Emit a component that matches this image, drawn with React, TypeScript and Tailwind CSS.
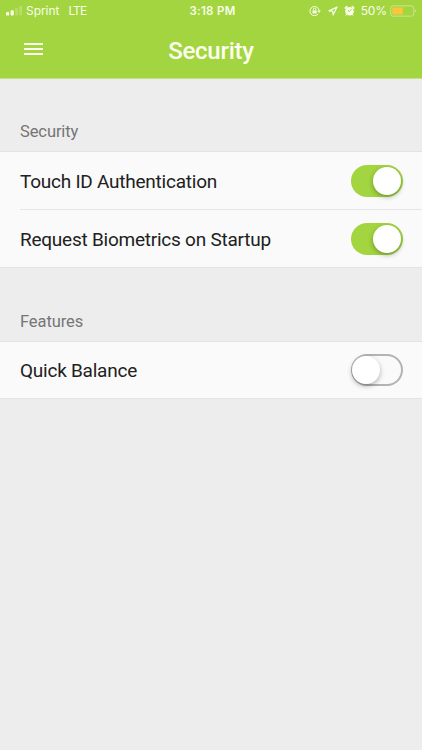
function StatusBar() {
  return (
    <div className="grid h-[22px] grid-cols-[1fr_auto_1fr] items-center pl-[6px] pr-[5px] font-['Inter',sans-serif] text-[12px] leading-[22px] text-[#f9fdea]">
      <div className="flex items-center">
        <svg width="16" height="10" viewBox="0 0 16 10" fill="currentColor">
          <rect x="0" y="6" width="3.2" height="3.5" rx=".9" />
          <rect x="4.6" y="4.2" width="3.2" height="5.3" rx=".9" />
          <rect x="9.2" y="2" width="2.8" height="7.5" rx=".9" opacity=".25" />
          <rect x="13.2" y="0" width="2.8" height="9.5" rx=".9" opacity=".25" />
        </svg>
        <span className="ml-[4px] tracking-[-0.05px]">Sprint</span>
        <span className="ml-[9px] tracking-[-0.9px]">LTE</span>
      </div>
      <div className="translate-x-px text-[11.5px] font-semibold tracking-[0.3px]">3:18 PM</div>
      <div className="flex items-center justify-end">
        <svg width="12" height="12" viewBox="0 0 12 12" fill="none" stroke="currentColor" strokeWidth="1">
          <path d="M9.2 8.9A4.6 4.6 0 1 1 10.1 5.4" />
          <path d="M8.3 5.4h3.5L10 7.9z" fill="currentColor" stroke="none" />
          <rect x="3.5" y="5.4" width="4.2" height="3.1" rx=".4" fill="currentColor" stroke="none" />
          <path d="M4.4 5.6V4.3a1.2 1.2 0 0 1 2.4 0v1.3" strokeWidth=".9" />
        </svg>
        <svg className="ml-[7px]" width="10" height="10" viewBox="0 0 10 10" fill="none" stroke="currentColor" strokeWidth="1.2" strokeLinejoin="round">
          <path d="M1 4.9 9 1 5.1 9 4.8 5.2z" />
        </svg>
        <svg className="ml-[6px]" width="11" height="12" viewBox="0 0 11 12" fill="currentColor">
          <circle cx="5.5" cy="6.2" r="4.3" />
          <path d="M1.2 3.1 2.8 1.6M9.8 3.1 8.2 1.6" stroke="currentColor" strokeWidth="1.5" strokeLinecap="round" />
          <path d="m2.7 9.3-.8 1M8.3 9.3l.8 1" stroke="currentColor" strokeWidth="1" strokeLinecap="round" />
          <path d="M7.5 4.2 5.5 6.5 3.8 5.5" fill="none" stroke="#a2d53f" strokeWidth="1" />
        </svg>
        <span className="ml-[6px] tracking-[-0.1px]">50%</span>
        <svg className="ml-[3px]" width="27" height="12" viewBox="0 0 27 12">
          <rect x=".8" y=".9" width="23" height="10.2" rx="2" fill="none" stroke="#f4fadb" strokeOpacity=".5" />
          <rect x="2.3" y="2.4" width="10.5" height="7.2" rx=".6" fill="#f9c63c" />
          <path d="M25.1 4.2c1.5.6 1.5 3 0 3.6z" fill="#f4fadb" opacity=".5" />
        </svg>
      </div>
    </div>
  );
}

function Header() {
  return (
    <header className="h-[79px] border-b border-[#c5e08d] bg-[#a2d53f]">
      <StatusBar />
      <div className="grid h-14 grid-cols-[1fr_auto_1fr] items-center px-6">
        <button aria-label="Menu" className="-mt-[2px] flex w-[19px] flex-col gap-[3px]">
          <span className="h-[2px] bg-[#fcffef]" />
          <span className="h-[2px] bg-[#fcffef]" />
          <span className="h-[2px] bg-[#fcffef]" />
        </button>
        <h1 className="pt-[2px] text-[24px] font-medium leading-[54px] tracking-[-0.25px] text-[#fcffef]">Security</h1>
      </div>
    </header>
  );
}

function Toggle({ on }: { on: boolean }) {
  return (
    <span
      role="switch"
      aria-checked={on}
      className={
        on
          ? "flex h-8 w-[52px] items-center justify-end rounded-full bg-[#a2d53f] px-[2px]"
          : "flex h-8 w-[52px] items-center rounded-full border-2 border-[#b3b3b3] bg-[#fafafa]"
      }
    >
      <span
        className={
          on
            ? "size-7 rounded-full bg-white shadow-[0_2px_5px_rgba(0,0,0,0.3)]"
            : "-ml-px size-7 rounded-full bg-white shadow-[0_2px_5px_rgba(0,0,0,0.3)]"
        }
      />
    </span>
  );
}

type Item = { label: string; on: boolean };

function Row({ label, on }: Item) {
  return (
    <div className="ml-5 flex h-[58px] items-center justify-between border-b border-[#e6e6e6] pr-[19px] pt-px last:h-[57px] last:border-b-0 only:h-14 only:pt-0">
      <span className="pt-[2px] text-[19px] tracking-[-0.24px] text-[#212121]">{label}</span>
      <Toggle on={on} />
    </div>
  );
}

function Section({ title, items }: { title: string; items: Item[] }) {
  return (
    <section>
      <h2 className="flex h-[73px] items-end pb-[8px] pl-5 text-[16.5px] leading-[22px] tracking-[-0.1px] text-[#757575]">{title}</h2>
      <div className="border-y border-[#e3e3e3] bg-[#fafafa]">
        {items.map((item) => (
          <Row key={item.label} {...item} />
        ))}
      </div>
    </section>
  );
}

export default function App() {
  return (
    <div className="min-h-screen bg-[#ededed] font-['Roboto',sans-serif]">
      <Header />
      <div className="-mt-px">
        <Section
          title="Security"
          items={[
            { label: "Touch ID Authentication", on: true },
            { label: "Request Biometrics on Startup", on: true },
          ]}
        />
        <Section title="Features" items={[{ label: "Quick Balance", on: false }]} />
      </div>
    </div>
  );
}
